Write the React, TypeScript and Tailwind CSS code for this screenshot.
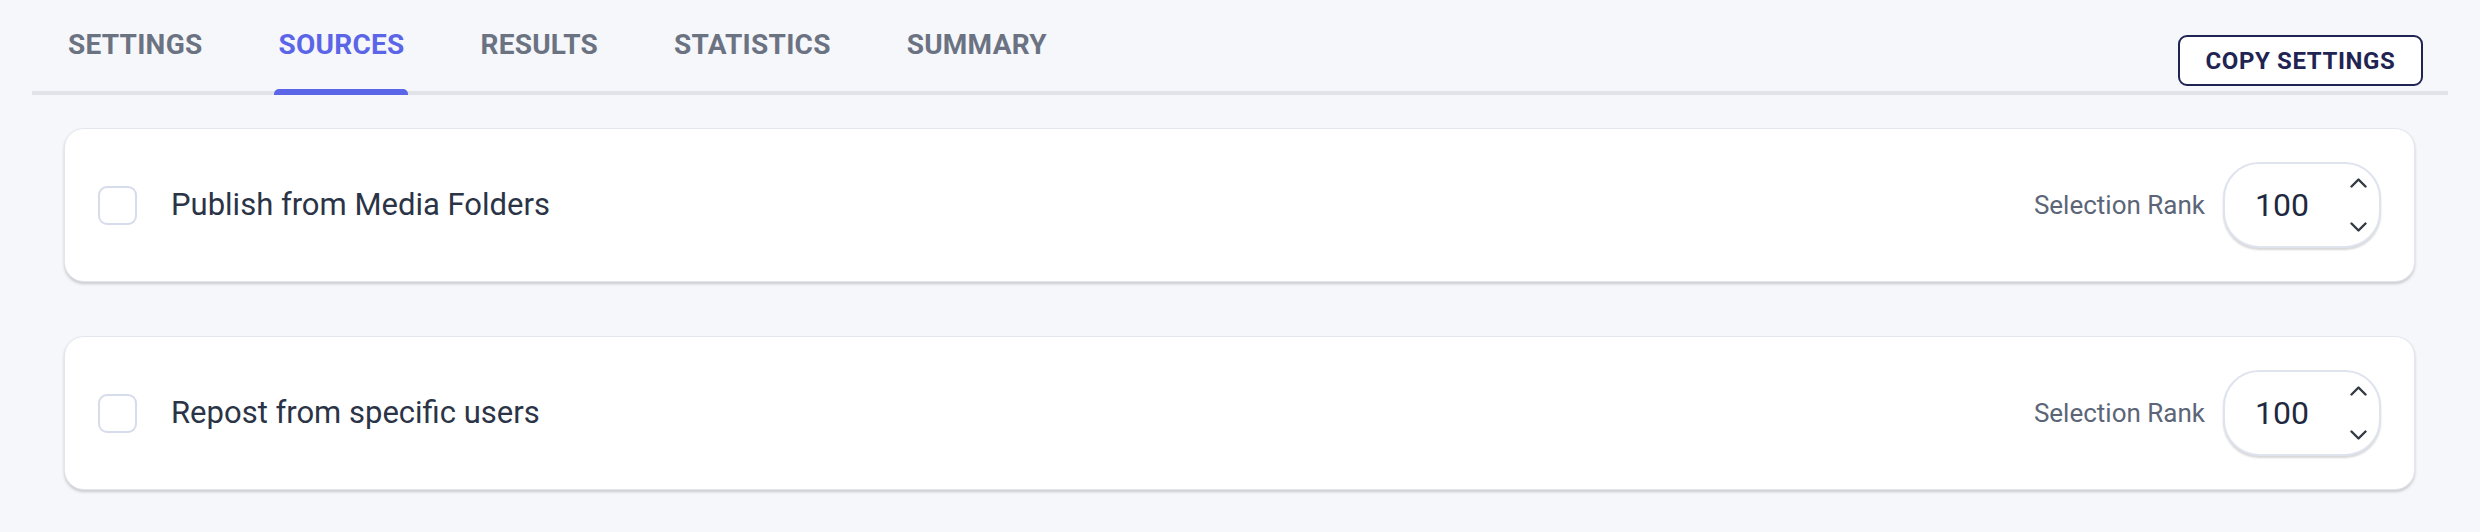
import { useState } from 'react';

const TABS = ['SETTINGS', 'SOURCES', 'RESULTS', 'STATISTICS', 'SUMMARY'];

const SOURCES = [
  { id: 'media', label: 'Publish from Media Folders', rank: 100 },
  { id: 'repost', label: 'Repost from specific users', rank: 100 },
];

function Chevron({ up }: { up?: boolean }) {
  return (
    <svg width="17" height="10" viewBox="0 0 17 10" fill="none" className="block">
      <path
        d={up ? 'M1.5 8.5L8.5 1.5L15.5 8.5' : 'M1.5 1.5L8.5 8.5L15.5 1.5'}
        stroke="#333a44"
        strokeWidth="2.4"
        strokeLinecap="round"
        strokeLinejoin="round"
      />
    </svg>
  );
}

function SourceCard({ label, rank }: { label: string; rank: number }) {
  const [checked, setChecked] = useState(false);

  return (
    <div className="flex h-[154px] items-center justify-between rounded-[20px] border border-[#e4e6ee] bg-white px-[33px] shadow-[0_2px_3px_rgba(0,0,0,0.18)]">
      <div className="flex items-center gap-[34px]">
        <button
          onClick={() => setChecked(!checked)}
          className="h-[39px] w-[39px] rounded-[9px] border-2 border-[#d7dcec] bg-white"
        />
        <span className="text-[31px] leading-[40px] text-[#2b3446]">{label}</span>
      </div>

      <div className="flex items-center gap-[18px]">
        <span className="text-[26px] leading-[32px] text-[#5b6577]">Selection Rank</span>
        <div className="flex h-[86px] w-[158px] items-center justify-between rounded-[36px] border-2 border-[#dfe3ee] bg-white pl-[30px] pr-[12px] shadow-[0_2px_2px_rgba(0,0,0,0.16)]">
          <span className="text-[32px] leading-[40px] text-[#1e2940]">{rank}</span>
          <div className="flex h-[54px] flex-col justify-between">
            <Chevron up />
            <Chevron />
          </div>
        </div>
      </div>
    </div>
  );
}

export default function App() {
  const active = 'SOURCES';

  return (
    <div className="h-[532px] w-full bg-[#f6f7fb] font-['Roboto',sans-serif]">
      <div className="mx-[32px] flex h-[95px] justify-between border-b-4 border-[#e2e3e8]">
        <nav className="flex gap-[68px] pl-[32px]">
          {TABS.map((tab) => (
            <div key={tab} className="relative flex h-full justify-center px-[4px] pt-[31px]">
              <span
                className={`text-[28px] font-bold leading-[28px] tracking-[0.25px] ${
                  tab === active ? 'text-[#5b65e8]' : 'text-[#6b7382]'
                }`}
              >
                {tab}
              </span>
              {tab === active && (
                <div className="absolute inset-x-0 bottom-[-4px] h-[6px] rounded-t-[5px] bg-[#5b65e8]" />
              )}
            </div>
          ))}
        </nav>

        <button className="mr-[25px] mt-[35px] flex h-[51px] w-[245px] items-center justify-center rounded-[9px] border-2 border-[#1f2453] bg-white text-[24px] font-bold leading-[24px] tracking-[0.6px] text-[#1f2453]">
          COPY SETTINGS
        </button>
      </div>

      <div className="ml-[64px] mr-[65px] mt-[33px] flex flex-col gap-[54px]">
        {SOURCES.map((s) => (
          <SourceCard key={s.id} label={s.label} rank={s.rank} />
        ))}
      </div>
    </div>
  );
}
